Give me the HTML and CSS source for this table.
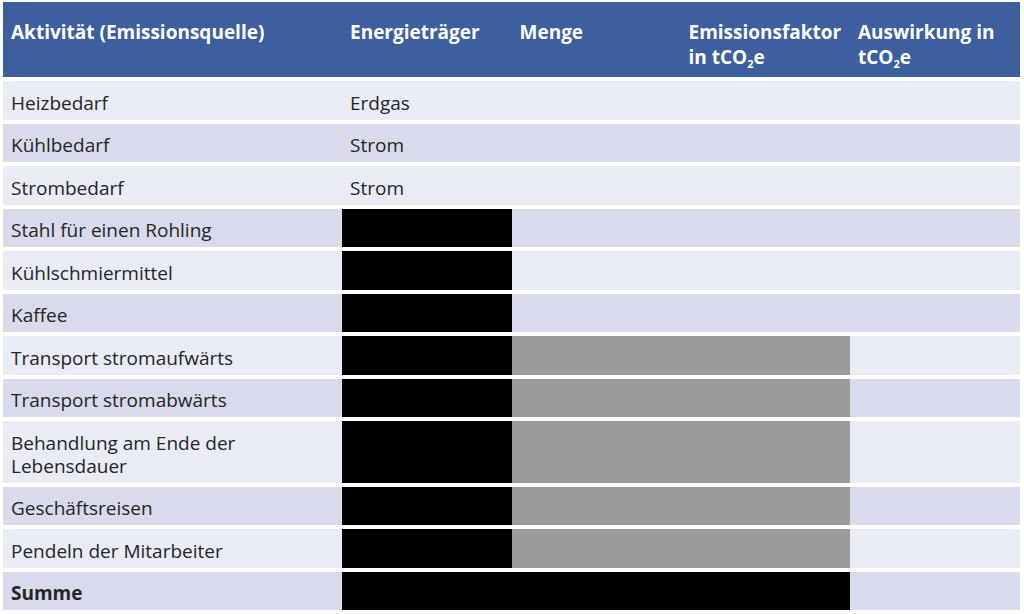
FILE: index.html
```html
<!DOCTYPE html>
<html lang="de">
<head>
<meta charset="utf-8">
<title>Emissionsquellen</title>
<link rel="stylesheet" href="styles.css">
</head>
<body>
<div class="table">
  <div class="row head">
    <div class="cell">Aktivität (Emissionsquelle)</div>
    <div class="cell">Energieträger</div>
    <div class="cell">Menge</div>
    <div class="cell">Emissionsfaktor in tCO<sub>2</sub>e</div>
    <div class="cell">Auswirkung in tCO<sub>2</sub>e</div>
  </div>
  <div class="row light">
    <div class="cell">Heizbedarf</div>
    <div class="cell">Erdgas</div>
    <div class="cell"></div><div class="cell"></div><div class="cell"></div>
  </div>
  <div class="row dark">
    <div class="cell">Kühlbedarf</div>
    <div class="cell">Strom</div>
    <div class="cell"></div><div class="cell"></div><div class="cell"></div>
  </div>
  <div class="row light">
    <div class="cell">Strombedarf</div>
    <div class="cell">Strom</div>
    <div class="cell"></div><div class="cell"></div><div class="cell"></div>
  </div>
  <div class="row dark">
    <div class="cell">Stahl für einen Rohling</div>
    <div class="cell black"></div>
    <div class="cell"></div><div class="cell"></div><div class="cell"></div>
  </div>
  <div class="row light">
    <div class="cell">Kühlschmiermittel</div>
    <div class="cell black"></div>
    <div class="cell"></div><div class="cell"></div><div class="cell"></div>
  </div>
  <div class="row dark">
    <div class="cell">Kaffee</div>
    <div class="cell black"></div>
    <div class="cell"></div><div class="cell"></div><div class="cell"></div>
  </div>
  <div class="row light">
    <div class="cell">Transport stromaufwärts</div>
    <div class="cell black"></div>
    <div class="cell gray span2"></div>
    <div class="cell"></div>
  </div>
  <div class="row dark">
    <div class="cell">Transport stromabwärts</div>
    <div class="cell black"></div>
    <div class="cell gray span2"></div>
    <div class="cell"></div>
  </div>
  <div class="row light">
    <div class="cell">Behandlung am Ende der Lebensdauer</div>
    <div class="cell black"></div>
    <div class="cell gray span2"></div>
    <div class="cell"></div>
  </div>
  <div class="row dark">
    <div class="cell">Geschäftsreisen</div>
    <div class="cell black"></div>
    <div class="cell gray span2"></div>
    <div class="cell"></div>
  </div>
  <div class="row light">
    <div class="cell">Pendeln der Mitarbeiter</div>
    <div class="cell black"></div>
    <div class="cell gray span2"></div>
    <div class="cell"></div>
  </div>
  <div class="row dark sum">
    <div class="cell">Summe</div>
    <div class="cell black span3"></div>
    <div class="cell"></div>
  </div>
</div>
</body>
</html>
```
FILE: styles.css
```css
html, body {
  margin: 0;
  padding: 0;
  background: #ffffff;
}
body {
  font-family: "Open Sans", "Noto Sans", sans-serif;
  font-size: 19px;
  color: #262626;
}
.table {
  display: flex;
  flex-direction: column;
  gap: 4px;
  margin: 2px 0 0 3px;
  width: 1017px;
}
.row {
  display: grid;
  grid-template-columns: 339px 169.5px 169px 169.5px 170px;
}
.cell {
  padding: 10.5px 8px 5px 8px;
  line-height: 23px;
}
.head {
  background: #3e5f9e;
  color: #ffffff;
  font-weight: 700;
  height: 75px;
}
.head .cell {
  padding-top: 18px;
  padding-right: 4px;
  line-height: 25px;
}
.head sub {
  font-size: 11px;
  line-height: 0;
  vertical-align: -4px;
}
.light { background: #e9ebf5; }
.dark { background: #d9daeb; }
.sum { font-weight: 700; }
.black { background: #000000; }
.gray { background: #9c9b9b; }
.span2 { grid-column: span 2; }
.span3 { grid-column: span 3; }
```
